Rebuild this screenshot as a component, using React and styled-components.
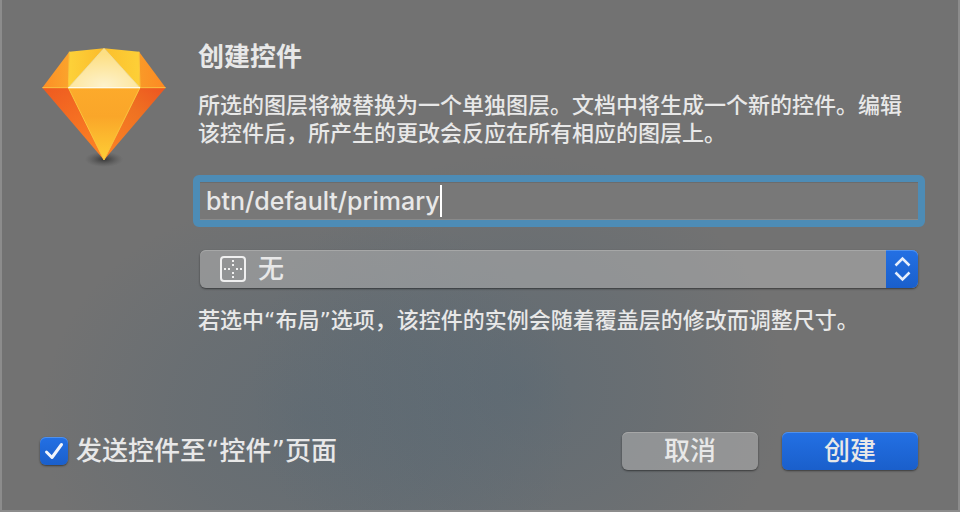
import React, { useState } from 'react';
import styled, { createGlobalStyle } from 'styled-components';

const GlobalStyle = createGlobalStyle`
    * {
        box-sizing: border-box;
    }
    body {
        margin: 0;
        background: #727272;
    }
    body, button, input, select {
        font-family: "DejaVu Sans", "Noto Sans CJK SC", sans-serif;
        font-weight: 500;
        color: #e8e8e8;
    }
`;

const Dialog = styled.form`
    display: flex;
    flex-direction: column;
    min-height: 100vh;
    padding: 43px 40px 40px 38px;
    border: 2px solid #8c8c8c;
    border-top: 0;
    background:
        radial-gradient(ellipse 28% 46% at 54% 76%, rgba(70, 97, 117, 0.36), rgba(70, 97, 117, 0.2) 50%, transparent),
        radial-gradient(ellipse 28% 44% at 32% 82%, rgba(70, 97, 117, 0.32), rgba(70, 97, 117, 0.2) 50%, transparent),
        #727272;
`;

const Main = styled.div`
    display: grid;
    grid-template-columns: 124px minmax(0, 1fr);
    column-gap: 32px;
    padding-left: 2px;
`;

const Logo = styled.svg`
    width: 124px;
    height: 120px;
    margin-top: 5px;
`;

const Title = styled.h1`
    margin: 0 0 21px;
    font-size: 26px;
    line-height: 28px;
    font-weight: 700;
`;

const Text = styled.p`
    margin: 0;
    font-size: 22px;
    line-height: 28px;
`;

const Fields = styled.div`
    display: flex;
    flex-direction: column;
    gap: 23px;
    margin: 27px 0 19px 2px;
`;

const InputBox = styled.div`
    display: flex;
    align-items: center;
    height: 52px;
    margin: 0 -7px;
    padding-left: 6px;
    border: 7px solid #4d8cb6;
    border-radius: 6px;
    background: #787878;
    box-shadow: inset 0 -1px #8a8a8a, inset 0 1px #6c6c6c;
`;

const Input = styled.input`
    field-sizing: content;
    max-width: 100%;
    padding: 0;
    border: 0;
    outline: 0;
    background: none;
    font-family: "Inter", "Noto Sans CJK SC", sans-serif;
    font-size: 25px;
    line-height: 32px;
`;

const Caret = styled.span`
    width: 2px;
    height: 32px;
    background: #fff;
`;

const SelectBox = styled.div`
    position: relative;
`;

const Select = styled.select`
    display: block;
    width: 100%;
    height: 38px;
    padding: 0 40px 0 58px;
    appearance: none;
    border: 0;
    border-radius: 6px;
    background: rgba(184, 184, 184, 0.5);
    box-shadow: inset 0 1px #a6a7a7, 0 1px 2px rgba(0, 0, 0, 0.5);
    font-size: 26px;
    line-height: 38px;
`;

const LayoutIcon = styled.svg`
    position: absolute;
    top: 6px;
    left: 20px;
    width: 26px;
    height: 26px;
    pointer-events: none;
`;

const Stepper = styled.svg`
    position: absolute;
    top: 0;
    right: 0;
    width: 32px;
    height: 38px;
    border-radius: 0 6px 6px 0;
    background: linear-gradient(#2370e4, #1a5fcb);
    box-shadow: inset 0 1px #5091ec;
    pointer-events: none;
`;

const Footer = styled.div`
    display: flex;
    align-items: center;
    gap: 24px;
    margin-top: auto;
`;

const CheckLabel = styled.label`
    display: flex;
    align-items: center;
    gap: 8px;
    margin-right: auto;
    font-size: 26px;
    line-height: 38px;
`;

const CheckBox = styled.span`
    position: relative;
    width: 28px;
    height: 28px;
`;

const Check = styled.input`
    display: block;
    width: 28px;
    height: 28px;
    margin: 0;
    appearance: none;
    border-radius: 6px;
    background: #959595;
    box-shadow: 0 1px 2px rgba(0, 0, 0, 0.5);

    &:checked {
        background: linear-gradient(#2370e4, #1a5fcb);
        box-shadow: inset 0 1px #5091ec, 0 1px 2px rgba(0, 0, 0, 0.5);
    }
    & + svg {
        display: none;
    }
    &:checked + svg {
        display: block;
    }
`;

const CheckMark = styled.svg`
    position: absolute;
    top: 0;
    left: 0;
    width: 28px;
    height: 28px;
    pointer-events: none;
`;

const Button = styled.button`
    width: 136px;
    height: 38px;
    padding: 0;
    border: 0;
    border-radius: 6px;
    background: ${props => props.$primary ? 'linear-gradient(#2370e4, #1a5fcb)' : 'rgba(184, 184, 184, 0.5)'};
    box-shadow: inset 0 1px ${props => props.$primary ? '#5091ec' : '#a6a7a7'}, 0 1px 2px rgba(0, 0, 0, 0.5);
    font-size: 26px;
    line-height: 38px;
`;

const SketchLogo = () => {
    return (
        <Logo viewBox="36 36 372 360" aria-hidden="true">
            <defs>
                <linearGradient id="sideL" x1="0" y1="0" x2="0.6" y2="1">
                    <stop offset="0" stopColor="#ee5a20" />
                    <stop offset="1" stopColor="#fb8024" />
                </linearGradient>
                <linearGradient id="sideR" x1="1" y1="0" x2="0.3" y2="1">
                    <stop offset="0" stopColor="#ee5420" />
                    <stop offset="0.45" stopColor="#ef7222" />
                    <stop offset="1" stopColor="#fb8024" />
                </linearGradient>
                <linearGradient id="front" x1="0" y1="0" x2="0" y2="1">
                    <stop offset="0" stopColor="#fdaa2b" />
                    <stop offset="0.4" stopColor="#faa629" />
                    <stop offset="1" stopColor="#fece35" />
                </linearGradient>
                <linearGradient id="wingL" x1="0" y1="0" x2="1" y2="0">
                    <stop offset="0" stopColor="#fd8e25" />
                    <stop offset="1" stopColor="#fba42c" />
                </linearGradient>
                <linearGradient id="wingR" x1="0" y1="0" x2="1" y2="0">
                    <stop offset="0" stopColor="#f99a28" />
                    <stop offset="1" stopColor="#fd8923" />
                </linearGradient>
                <linearGradient id="topL" x1="0" y1="0" x2="1" y2="0">
                    <stop offset="0" stopColor="#fdd239" />
                    <stop offset="1" stopColor="#fbbb2b" />
                </linearGradient>
                <linearGradient id="topR" x1="0" y1="0" x2="1" y2="0">
                    <stop offset="0" stopColor="#fbbf2d" />
                    <stop offset="1" stopColor="#fdd037" />
                </linearGradient>
                <radialGradient id="shine" cx="0.5" cy="0.95" r="0.8">
                    <stop offset="0" stopColor="#fdf2cc" />
                    <stop offset="1" stopColor="#fddf83" />
                </radialGradient>
                <radialGradient id="shadow">
                    <stop offset="0" stopColor="#333" stopOpacity="0.95" />
                    <stop offset="0.5" stopColor="#444" stopOpacity="0.5" />
                    <stop offset="1" stopColor="#555" stopOpacity="0" />
                </radialGradient>
            </defs>
            <ellipse cx="222" cy="370" rx="58" ry="23" fill="url(#shadow)" />
            <path d="M37 155H115L222 372Z" fill="url(#sideL)" />
            <path d="M407 155H330L222 372Z" fill="url(#sideR)" />
            <path d="M115 155H330L222 372Z" fill="url(#front)" />
            <path d="M37 155L118 47L115 155Z" fill="url(#wingL)" />
            <path d="M407 155L327 47L330 155Z" fill="url(#wingR)" />
            <path d="M118 47L222 37L115 155Z" fill="url(#topL)" />
            <path d="M327 47L222 37L330 155Z" fill="url(#topR)" />
            <path d="M222 37L330 155H115Z" fill="url(#shine)" />
            <path d="M118 47L115 155L222 372L330 155L327 47" fill="none" stroke="#fec63b" strokeWidth="3" />
            <path d="M37 155H407" stroke="#fdc23f" strokeWidth="3" />
            <path d="M222 37L115 155H330Z" fill="none" stroke="#feeaa0" strokeWidth="2" />
            <path d="M115 155H330" stroke="#fffbea" strokeWidth="4" />
        </Logo>
    )
}

const App = () => {
    const [name, setName] = useState('btn/default/primary');
    const [send, setSend] = useState(true);

    return (
        <>
            <GlobalStyle />
            <Dialog onSubmit={e => e.preventDefault()}>
                <Main>
                    <SketchLogo />
                    <div>
                        <Title>创建控件</Title>
                        <Text>所选的图层将被替换为一个单独图层。文档中将生成一个新的控件。编辑该控件后，所产生的更改会反应在所有相应的图层上。</Text>
                        <Fields>
                            <InputBox>
                                <Input aria-label="创建控件" value={name} onChange={e => setName(e.target.value)} />
                                <Caret />
                            </InputBox>
                            <SelectBox>
                                <Select aria-label="布局" defaultValue="none">
                                    <option value="none">无</option>
                                </Select>
                                <LayoutIcon viewBox="0 0 26 26" fill="none" stroke="#f0f0f0" strokeWidth="2">
                                    <rect x="1" y="1" width="24" height="24" rx="3" />
                                    <path d="M13 4v2M13 8v2M13 16v2M13 20v2M4 13h2M8 13h2M16 13h2M20 13h2" />
                                </LayoutIcon>
                                <Stepper viewBox="0 0 32 38" fill="none" stroke="#e6eefb" strokeWidth="2.5">
                                    <path d="M9.500 15.500L16.500 8.500L23.500 15.500M9.500 22.500L16.500 29.500L23.500 22.500" />
                                </Stepper>
                            </SelectBox>
                        </Fields>
                        <Text>若选中“布局”选项，该控件的实例会随着覆盖层的修改而调整尺寸。</Text>
                    </div>
                </Main>
                <Footer>
                    <CheckLabel>
                        <CheckBox>
                            <Check type="checkbox" checked={send} onChange={e => setSend(e.target.checked)} />
                            <CheckMark viewBox="0 0 28 28" fill="none" stroke="#f0f4fc" strokeWidth="3" strokeLinecap="round" strokeLinejoin="round">
                                <path d="M6.500 15L12 20.500L21.500 7.500" />
                            </CheckMark>
                        </CheckBox>
                        发送控件至“控件”页面
                    </CheckLabel>
                    <Button type="button">取消</Button>
                    <Button type="submit" $primary>创建</Button>
                </Footer>
            </Dialog>
        </>
    )
}

export default App;
